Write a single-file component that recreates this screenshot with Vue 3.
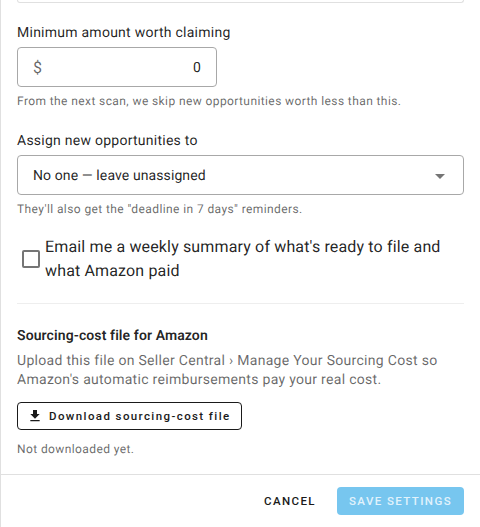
<script setup>
const minAmount = '0'
</script>

<template>
  <div class="dialog">
    <div class="content">
      <div class="top-field"></div>

      <label class="label first">Minimum amount worth claiming</label>
      <div class="field amount">
        <span class="adorn">$</span>
        <span class="value">{{ minAmount }}</span>
      </div>
      <p class="helper">From the next scan, we skip new opportunities worth less than this.</p>

      <label class="label second">Assign new opportunities to</label>
      <div class="field select">
        <span class="select-text">No one — leave unassigned</span>
        <svg class="caret" width="24" height="24" viewBox="0 0 24 24"><path d="M7 10l5 5 5-5z" /></svg>
      </div>
      <p class="helper">They'll also get the "deadline in 7 days" reminders.</p>

      <div class="check-row">
        <span class="check-wrap"><span class="checkbox"></span></span>
        <span class="check-label">Email me a weekly summary of what's ready to file and what Amazon paid</span>
      </div>

      <div class="divider"></div>

      <h3 class="heading">Sourcing-cost file for Amazon</h3>
      <p class="body">Upload this file on Seller Central › Manage Your Sourcing Cost so Amazon's automatic reimbursements pay your real cost.</p>
      <button class="download">
        <svg width="16" height="16" viewBox="0 0 24 24"><path d="M19 9h-4V3H9v6H5l7 7 7-7zM5 18v2h14v-2H5z" /></svg>
        <span>Download sourcing-cost file</span>
      </button>
      <p class="helper status">Not downloaded yet.</p>
    </div>

    <div class="actions">
      <button class="cancel">Cancel</button>
      <button class="save">Save settings</button>
    </div>
  </div>
</template>

<style>
html, body {
  margin: 0;
  background: #fff;
}
</style>

<style scoped>
.dialog {
  width: 480px;
  height: 527px;
  box-sizing: border-box;
  border-left: 1px solid #e0e0e0;
  display: flex;
  flex-direction: column;
  font-family: Roboto, "Liberation Sans", sans-serif;
  text-rendering: geometricPrecision;
  background: #fff;
  overflow: hidden;
}

.content {
  flex: 1;
  padding: 0 16px;
}

.top-field {
  height: 3px;
  box-sizing: border-box;
  border: 1px solid #e0e0e0;
  border-top: 0;
  border-radius: 0 0 4px 4px;
}

.label {
  display: block;
  font-size: 14px;
  line-height: 20px;
  letter-spacing: 0.25px;
  color: rgba(0, 0, 0, 0.87);
}

.label.first {
  margin-top: 20px;
  margin-bottom: 4px;
}

.label.second {
  margin-top: 22px;
  margin-bottom: 4px;
}

.field {
  height: 40px;
  box-sizing: border-box;
  border: 1px solid #a8a8a8;
  border-radius: 4px;
  display: flex;
  align-items: center;
  padding: 1px 15px 0;
  font-size: 14px;
  letter-spacing: 0.1px;
  color: rgba(0, 0, 0, 0.87);
}

.amount {
  width: 200px;
  justify-content: space-between;
}

.adorn {
  font-size: 16px;
  color: rgba(0, 0, 0, 0.6);
}

.select {
  justify-content: space-between;
  padding-right: 11px;
}

.caret {
  fill: #757575;
}

.helper {
  margin: 6px 0 0;
  font-size: 12px;
  line-height: 16px;
  letter-spacing: 0.4px;
  color: rgba(0, 0, 0, 0.6);
}

.check-row {
  margin-top: 18px;
  display: flex;
  align-items: center;
}

.check-wrap {
  width: 28px;
  display: flex;
  justify-content: center;
  flex-shrink: 0;
}

.checkbox {
  width: 18px;
  height: 18px;
  box-sizing: border-box;
  border: 2px solid #757575;
  border-radius: 2px;
}

.check-label {
  font-size: 16px;
  line-height: 24px;
  letter-spacing: 0.15px;
  color: rgba(0, 0, 0, 0.87);
}

.divider {
  height: 1px;
  background: #eeeeee;
  margin-top: 20px;
}

.heading {
  margin: 22px 0 0;
  font-size: 14px;
  line-height: 20px;
  font-weight: 600;
  letter-spacing: 0.1px;
  color: rgba(0, 0, 0, 0.87);
}

.body {
  margin: 6px 0 0;
  font-size: 14px;
  line-height: 19px;
  letter-spacing: 0.3px;
  color: rgba(0, 0, 0, 0.6);
}

.download {
  margin-top: 12px;
  height: 28px;
  width: 225px;
  padding: 0 0 0 9px;
  display: inline-flex;
  align-items: center;
  gap: 6px;
  background: #fff;
  border: 1px solid #1a1a1a;
  border-radius: 4px;
  font-family: inherit;
  font-size: 11.5px;
  font-weight: 500;
  letter-spacing: 1.4px;
  color: #1a1a1a;
}

.download svg {
  fill: #1a1a1a;
}

.status {
  margin-top: 11px;
}

.actions {
  height: 53px;
  box-sizing: border-box;
  border-top: 1px solid #e0e0e0;
  padding: 12px 16px 0 0;
  display: flex;
  justify-content: flex-end;
  align-items: flex-start;
  gap: 7px;
}

.actions button {
  height: 28px;
  border: 0;
  border-radius: 4px;
  font-family: inherit;
  font-size: 11.5px;
  font-weight: 500;
  letter-spacing: 1.4px;
  text-transform: uppercase;
}

.cancel {
  width: 80px;
  background: transparent;
  color: #1a1a1a;
}

.save {
  width: 127px;
  background: #77c6ef;
  color: rgba(255, 255, 255, 0.8);
}
</style>
